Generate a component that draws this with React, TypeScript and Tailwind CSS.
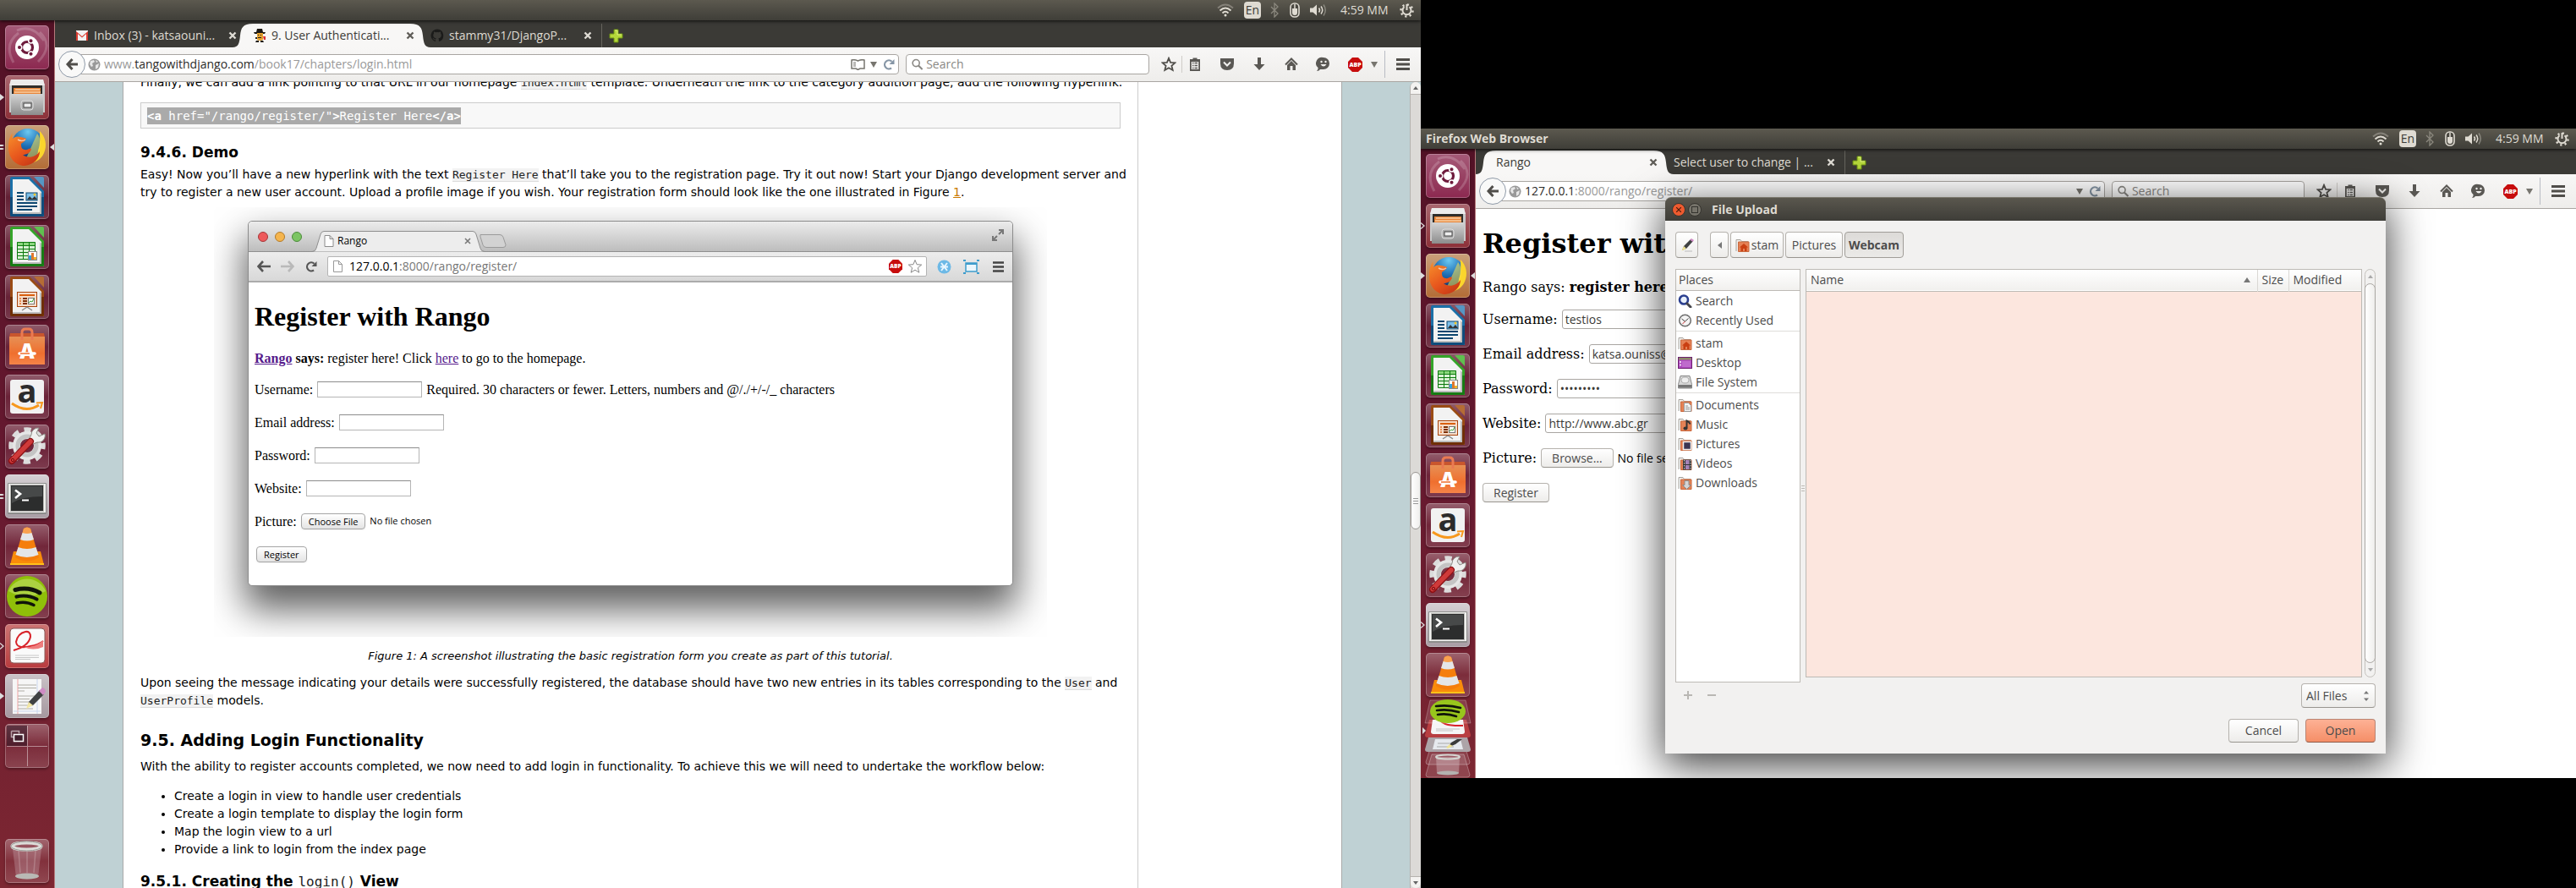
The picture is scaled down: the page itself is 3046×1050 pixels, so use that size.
import React from "react";

const UI = "font-['Open_Sans',sans-serif]";

/* ---------- panel indicators ---------- */

function Wifi() {
  return (
    <svg width="20" height="16" viewBox="0 0 20 16" fill="none" stroke="#dfdbd2" strokeWidth="2">
      <path d="M1 5.5Q10 -2.500 19 5.500" opacity=".35" />
      <path d="M3.500 8.500Q10 2.500 16.500 8.500" />
      <path d="M6.500 11.500Q10 8 13.500 11.500" />
      <circle cx="10" cy="14" r="1.500" fill="#dfdbd2" stroke="none" />
    </svg>
  );
}

function Bluetooth() {
  return (
    <svg width="12" height="18" viewBox="0 0 12 18" fill="none" stroke="#8b887e" strokeWidth="1.3">
      <path d="M2 5l8 8-4 4V1l4 4-8 8" />
    </svg>
  );
}

function MouseBattery() {
  return (
    <svg width="12" height="18" viewBox="0 0 12 18">
      <rect x="1" y="1" width="10" height="16" rx="4.500" fill="#4a4841" stroke="#dfdbd2" strokeWidth="1.600" />
      <path d="M3 7h6v5a3 3 0 0 1-6 0z" fill="#dfdbd2" />
      <path d="M6 2v6" stroke="#dfdbd2" strokeWidth="1.500" />
    </svg>
  );
}

function Volume() {
  return (
    <svg width="20" height="16" viewBox="0 0 20 16" fill="none" stroke="#dfdbd2" strokeWidth="1.500">
      <path d="M0 5.500h3.500L8 1.500v13L3.500 10.500H0z" fill="#dfdbd2" stroke="none" />
      <path d="M10.500 5.500q2 2.500 0 5M13 3.500q3.500 4.500 0 9" />
      <path d="M16 1.500q4.500 6.500 0 13" opacity=".4" />
    </svg>
  );
}

function Session() {
  return (
    <svg width="17" height="17" viewBox="0 0 17 17" fill="none" stroke="#dfdbd2">
      <circle cx="8.500" cy="8.500" r="7" strokeWidth="2.500" strokeDasharray="2.200 3.300" />
      <path d="M5.500 4.300a5 5 0 1 0 6 0" strokeWidth="2" />
      <path d="M8.500 1v7" strokeWidth="2" />
    </svg>
  );
}

function TopPanel({ title }: { title?: string }) {
  return (
    <header className={`${UI} relative z-10 flex h-6 shrink-0 items-center bg-linear-to-b from-[#5c594f] to-[#3f3e38] pr-2 pl-1.5 text-sm text-[#dfdbd2] shadow-[0_1px_4px_rgba(0,0,0,0.8)]`}>
      <span className="font-bold">{title}</span>
      <div className="ml-auto flex items-center">
        <Wifi />
        <span className="ml-3 flex h-5 w-5 items-center justify-center rounded-sm bg-[#dfdbd2] text-sm text-[#3c3b37]">En</span>
        <span className="ml-2.5"><Bluetooth /></span>
        <span className="ml-3"><MouseBattery /></span>
        <span className="ml-3"><Volume /></span>
        <span className="ml-4 w-[58px] whitespace-nowrap">4:59 MM</span>
        <span className="ml-3"><Session /></span>
      </div>
    </header>
  );
}

/* ---------- launcher ---------- */

function UbuntuIcon() {
  return (
    <svg width="52" height="52" viewBox="0 0 52 52">
      <path d="M10 44Q-2 22 16 9M41 8Q58 24 39 43M14 6Q32 -2 46 18" fill="none" stroke="#fff" strokeWidth="3" opacity=".18" />
      <circle cx="26" cy="26" r="14" fill="#fff" />
      <circle cx="26" cy="26" r="6.500" fill="none" stroke="#6e1b3c" strokeWidth="3.200" />
      <g stroke="#fff" strokeWidth="1.500" fill="#6e1b3c">
        <circle cx="17" cy="26" r="2.800" />
        <circle cx="30.500" cy="18.200" r="2.800" />
        <circle cx="30.500" cy="33.800" r="2.800" />
      </g>
    </svg>
  );
}

function FilesIcon() {
  return (
    <svg width="52" height="52" viewBox="0 0 52 52">
      <defs>
        <linearGradient id="cab" x1="0" y1="0" x2="0" y2="1">
          <stop offset="0" stopColor="#d4d4d4" />
          <stop offset="1" stopColor="#8c8c8c" />
        </linearGradient>
      </defs>
      <path d="M7 5h38l2 8v31H5V13z" fill="#c9c9c9" />
      <path d="M7 5h38l2 7H5z" fill="#ececec" />
      <path d="M8 12h36v11H8z" fill="#2f2d2a" />
      <path d="M10 15h32v8H10z" fill="#e8853a" />
      <path d="M12 17h29M11 20h31" stroke="#fff3d8" strokeWidth="1.200" />
      <path d="M7 22h38v25H7z" fill="url(#cab)" />
      <rect x="19" y="30" width="14" height="11" rx="3" fill="#aaa" stroke="#dedede" />
      <rect x="22" y="33" width="9" height="5" fill="#eee" stroke="#444" />
    </svg>
  );
}

function FirefoxIcon() {
  return (
    <svg width="52" height="52" viewBox="0 0 52 52">
      <defs>
        <radialGradient id="globe" cx=".5" cy=".1" r=".9">
          <stop offset="0" stopColor="#6cc9f2" />
          <stop offset=".5" stopColor="#1f6fb5" />
          <stop offset="1" stopColor="#0b2a63" />
        </radialGradient>
        <linearGradient id="fox" x1="0" y1="0" x2=".7" y2="1">
          <stop offset="0" stopColor="#f7912c" />
          <stop offset=".6" stopColor="#e8571d" />
          <stop offset="1" stopColor="#c93a16" />
        </linearGradient>
      </defs>
      <circle cx="27" cy="23" r="19" fill="url(#globe)" />
      <path d="M41 7c7 7 9 17 5 26-4 9-13 13-20 11 9-3 13-8 13-14 3-8 2-15 2-23z" fill="#fbd52c" />
      <path d="M38 10c5 6 5 16 1 24-4 5-9 7-14 5z" fill="#fbe24c" opacity=".55" />
      <path d="M9 9c-1 3-1 5 0 7 3-3 6-3 9-2 3 0 4 1 7 2-1 3-4 4-6 6 0 3 0 6 4 7 4 1 6-3 8-1-1 5-6 7-10 7 6 5 15 3 20-4 0 8-7 16-18 17C12 48 4 38 4 27 4 19 5 14 9 9z" fill="url(#fox)" />
      <path d="M15 17q5 3 9 0" stroke="#fff" strokeWidth="1.500" fill="none" opacity=".6" />
    </svg>
  );
}

function OfficePage({ dark, mid, light, children }: { dark: string; mid: string; light: string; children: React.ReactNode }) {
  return (
    <svg width="52" height="52" viewBox="0 0 52 52">
      <path d="M8 2h21l17 17v30H8a2 2 0 0 1-2-2V4a2 2 0 0 1 2-2z" fill={mid} />
      <path d="M6 26h40v21a2 2 0 0 1-2 2H8a2 2 0 0 1-2-2z" fill={dark} opacity=".7" />
      <path d="M34 2h10a2 2 0 0 1 2 2v11z" fill={light} />
      <path d="M9 5h19l15 15v26H9z" fill="#f2f2f2" />
      <path d="M9 46V44h32V20l2 2v24z" fill="#bcbcbc" />
      {children}
    </svg>
  );
}

function WriterIcon() {
  return (
    <OfficePage dark="#0a3f69" mid="#1b70a8" light="#5596c4">
      <path d="M14 21h8M14 25h8M14 29h8M14 33h24M14 37h24M14 41h18" stroke="#0b466f" strokeWidth="2" />
      <rect x="25" y="21" width="13" height="9" fill="#7dc0ea" stroke="#0b466f" />
      <path d="M26 29l3-4 3 3 3-3 3 4z" fill="#333" />
      <circle cx="35" cy="23" r="1.500" fill="#f5c52a" />
    </OfficePage>
  );
}

function CalcIcon() {
  return (
    <OfficePage dark="#0c6b0c" mid="#35a52a" light="#5fc04f">
      <path d="M14 20h22v20H14z" fill="#d9f2d4" />
      <path d="M14 20h22v4H14z" fill="#8ad67d" />
      <path d="M14.500 20.500h21v20h-21zM14 24.500h22M14 28.500h22M14 32.500h22M14 36.500h22M21.500 20v20M28.500 20v20" fill="none" stroke="#0d7a0f" />
      <rect x="27.500" y="31.500" width="10" height="10" fill="#fff" stroke="#888" />
      <path d="M28 36h3v5h-3z" fill="#2fa3e0" />
      <path d="M31 33h3v8h-3z" fill="#e0792f" />
      <path d="M34 38h3v3h-3z" fill="#f0b429" />
    </OfficePage>
  );
}

function ImpressIcon() {
  return (
    <OfficePage dark="#5c2400" mid="#9a4c15" light="#b56c35">
      <rect x="14.500" y="20.500" width="23" height="17" fill="#f6ddca" stroke="#a8440d" />
      <path d="M17 24h18" stroke="#d9600f" strokeWidth="2" />
      <path d="M17 28h2M17 31h2M17 34h2" stroke="#e88a4e" strokeWidth="2" />
      <path d="M21 28h5M21 31h5M21 34h5" stroke="#7c2f05" strokeWidth="2" />
      <rect x="27.500" y="27.500" width="7" height="7" fill="#fff" stroke="#777" />
      <path d="M28 33l2-2 2 1 2-4" fill="none" stroke="#3a9c2c" />
      <path d="M26 38l-6 4M26 38l6 4" stroke="#8a8a8a" strokeWidth="1.500" />
    </OfficePage>
  );
}

function SoftwareIcon() {
  return (
    <svg width="52" height="52" viewBox="0 0 52 52">
      <defs>
        <linearGradient id="bag" x1="0" y1="0" x2="0" y2="1">
          <stop offset="0" stopColor="#e79055" />
          <stop offset=".6" stopColor="#ef6f2e" />
          <stop offset="1" stopColor="#f58448" />
        </linearGradient>
      </defs>
      <path d="M6 10h40l1 5H5z" fill="#c9562d" />
      <path d="M5 14h42v33H5z" fill="url(#bag)" />
      <path d="M20 18V9q0-4 4-4h4q4 0 4 4v9" fill="none" stroke="#ea7a52" strokeWidth="3" />
      <text x="26" y="40" textAnchor="middle" fontFamily="Open Sans" fontWeight="800" fontSize="24" fill="#fff">A</text>
      <path d="M17 34h18" stroke="#fff" strokeWidth="3.600" strokeLinecap="round" />
      <path d="M18 34h11" stroke="#ef6f2e" strokeWidth="1.500" />
    </svg>
  );
}

function AmazonIcon() {
  return (
    <svg width="52" height="52" viewBox="0 0 52 52">
      <rect x="6" y="6" width="40" height="40" rx="3" fill="#f1f1f1" />
      <text x="26" y="33" textAnchor="middle" fontFamily="Open Sans" fontWeight="700" fontSize="38" fill="#2b2b2b">a</text>
      <path d="M8 34q17 12 32 2" fill="none" stroke="#f7981d" strokeWidth="3" />
      <path d="M37 33.500l7-.500-2 7" fill="none" stroke="#f7981d" strokeWidth="2" />
    </svg>
  );
}

function SettingsIcon() {
  return (
    <svg width="52" height="52" viewBox="0 0 52 52">
      <circle cx="26" cy="25" r="18.500" fill="none" stroke="#dcdcdc" strokeWidth="6.500" strokeDasharray="8 6.530" strokeDashoffset="4" />
      <circle cx="26" cy="25" r="12.500" fill="none" stroke="#e6e6e6" strokeWidth="9" />
      <circle cx="26" cy="25" r="11" fill="none" stroke="#c4c4c4" strokeWidth="5" />
      <path d="M31 12a8 8 0 0 1 9-8l-3 6 3 4 7-3a8 8 0 0 1-9 10l-5 2-5-5z" fill="#f0f0ef" stroke="#8b8b84" />
      <path d="M8 43L30 20" stroke="#8d1014" strokeWidth="8" strokeLinecap="round" />
      <path d="M8 42.500L30 20" stroke="#cf3a3a" strokeWidth="5.500" strokeLinecap="round" />
      <circle cx="9" cy="42" r="1.700" fill="none" stroke="#7c0d10" />
    </svg>
  );
}

function TerminalIcon() {
  return (
    <svg width="52" height="52" viewBox="0 0 52 52">
      <rect x="3" y="10" width="46" height="37" rx="1" fill="#8d8d8b" />
      <rect x="4" y="11" width="44" height="34" fill="#f0f0ee" />
      <rect x="6" y="12" width="40" height="32" fill="#b9b9b6" />
      <rect x="7" y="13" width="38" height="30" fill="#2c2d2d" />
      <path d="M8 14h36v12Q20 26 8 34z" fill="#5a5b5b" opacity=".6" />
      <path d="M12 18.500l6 4.500-6 5" fill="none" stroke="#fff" strokeWidth="2.600" />
      <path d="M20 30.500h8" stroke="#fff" strokeWidth="2" />
    </svg>
  );
}

function VlcIcon() {
  return (
    <svg width="52" height="52" viewBox="0 0 52 52">
      <path d="M10 32h32l4 16H6z" fill="#f98c0a" />
      <path d="M6 46h40v2H6z" fill="#ffc21a" />
      <path d="M22 5q4-3 8 0l10 34q-14 9-28 0z" fill="#f57e0c" />
      <path d="M20.500 10h11l2.500 8q-8 3-16 0z" fill="#e4e6e8" />
      <path d="M15.500 27q10.500 4 21 0l3 9q-14 6-27 0z" fill="#e4e6e8" />
      <path d="M22 5q4-3 8 0l1.500 5q-5.500 2-11 0z" fill="#f9a14f" />
    </svg>
  );
}

function SpotifyIcon() {
  return (
    <svg width="52" height="52" viewBox="0 0 52 52">
      <circle cx="26" cy="26" r="24" fill="#8fbf09" />
      <path d="M4 20a24 24 0 0 1 44 0Q26 32 4 20z" fill="#b8da5a" opacity=".7" />
      <g fill="none" stroke="#10140a" strokeLinecap="round">
        <path d="M12 18.500q16-4 29 3.500" strokeWidth="5" />
        <path d="M13.500 26.500q13-3 24 3" strokeWidth="4.200" />
        <path d="M14 34q11-2.500 20 2.500" strokeWidth="3.500" />
      </g>
    </svg>
  );
}

function PdfIcon() {
  return (
    <svg width="52" height="52" viewBox="0 0 52 52">
      <rect x="6" y="5" width="41" height="41" rx="4" fill="#fafafa" stroke="#8a5a58" />
      <path d="M10 31q18-5 20-16 0-7-6-6-9 2-11 12 1 9 17 5 9-1 15-6" fill="none" stroke="#d8232a" strokeWidth="2" />
      <path d="M22 27q14 1 23-8v8q-12 5-23 0z" fill="#ee7d7d" />
      <path d="M12 37h28M12 39.500h28M12 41.500h18" stroke="#c8c8c8" strokeWidth="1.200" />
    </svg>
  );
}

function EditorIcon() {
  return (
    <svg width="52" height="52" viewBox="0 0 52 52">
      <path d="M9 6h34v41H9z" fill="#f6f6f6" />
      <path d="M15 6v41" stroke="#f3a3a3" />
      <path d="M38 6v41M10 44h32" stroke="#c9d6ee" />
      <path d="M15 13h22M15 16.500h22M15 20h8M15 26h20M15 29.500h14M15 33h18M15 37h14M15 41h18" stroke="#b0aea6" />
      <path d="M28 33L41 19l5 5-13 13-6 2z" fill="#3f4142" />
      <path d="M25 41l3-8 5 4z" fill="#f3e7a2" />
      <path d="M40 20l4-4q4 1 4 5l-3 4z" fill="#cf8cc4" />
    </svg>
  );
}

function WorkspaceIcon() {
  return (
    <svg width="52" height="52" viewBox="0 0 52 52">
      <path d="M2 2h24v24H2z" fill="#2c1320" opacity=".55" />
      <path d="M26.500 2v48M2 26.500h48" stroke="#fff" opacity=".45" />
      <path d="M7.500 8.500h9v3M7.500 8.500v7h3" fill="none" stroke="#b9a3aa" strokeWidth="1.500" />
      <rect x="10.500" y="12.500" width="11" height="8" fill="#40202d" stroke="#fff" strokeWidth="1.500" />
    </svg>
  );
}

function TrashIcon() {
  return (
    <svg width="52" height="52" viewBox="0 0 52 52">
      <path d="M9 12h34l-4 33q-13 5-26 0z" fill="#c9a5ae" opacity=".35" />
      <ellipse cx="26" cy="44" rx="14" ry="3.500" fill="#b9b9b5" />
      <path d="M16 14l2 26M36 14l-2 26M26 14v26" stroke="#fff" strokeWidth="1.500" opacity=".2" />
      <ellipse cx="25.500" cy="8.500" rx="17" ry="4" fill="none" stroke="#dcdcd8" strokeWidth="4" />
      <ellipse cx="25.500" cy="8.500" rx="18.500" ry="5.500" fill="none" stroke="#9a9a96" strokeWidth="1" />
    </svg>
  );
}

type Mark = "arrow" | "hollow" | "pips" | undefined;

function Indicator({ mark }: { mark: Mark }) {
  if (!mark) return null;
  return (
    <svg className="absolute top-1/2 -left-1.5 -translate-y-1/2" width="6" height="10" viewBox="0 0 6 10">
      {mark === "arrow" && <path d="M0 1l5 4-5 4z" fill="#ddd" />}
      {mark === "hollow" && <path d="M0 1.500l4 3.500-4 3.500" fill="none" stroke="#ddd" strokeWidth="1.300" />}
      {mark === "pips" && <path d="M0 2h3l2 1-2 1H0zM0 6h3l2 1-2 1H0z" fill="#ddd" />}
    </svg>
  );
}

const glass = "bg-linear-to-b from-white/30 via-white/5 to-white/15";

const tiles: { name: string; icon: () => React.ReactElement; tone: string }[] = [
  { name: "Dash", icon: UbuntuIcon, tone: "bg-linear-to-b from-[#a55a78] to-[#8c2850]" },
  { name: "Files", icon: FilesIcon, tone: "bg-linear-to-b from-[#a8666f] to-[#8c2f38]" },
  { name: "Firefox", icon: FirefoxIcon, tone: "bg-linear-to-b from-[#c9a07a] to-[#b36c35]" },
  { name: "Writer", icon: WriterIcon, tone: glass },
  { name: "Calc", icon: CalcIcon, tone: glass },
  { name: "Impress", icon: ImpressIcon, tone: glass },
  { name: "Software Center", icon: SoftwareIcon, tone: glass },
  { name: "Amazon", icon: AmazonIcon, tone: glass },
  { name: "System Settings", icon: SettingsIcon, tone: glass },
  { name: "Terminal", icon: TerminalIcon, tone: "bg-linear-to-b from-[#d6d0d4] to-[#a89da4]" },
  { name: "VLC", icon: VlcIcon, tone: glass },
  { name: "Spotify", icon: SpotifyIcon, tone: glass },
  { name: "Document Viewer", icon: PdfIcon, tone: "bg-linear-to-b from-[#cc7473] to-[#b83a3e]" },
  { name: "Text Editor", icon: EditorIcon, tone: "bg-linear-to-b from-[#cbc3c8] to-[#a5989f]" },
  { name: "Workspaces", icon: WorkspaceIcon, tone: glass },
];

function Tile({ name, icon: Icon, tone, mark, focused }: { name: string; icon: () => React.ReactElement; tone: string; mark?: Mark; focused?: boolean }) {
  return (
    <div className="relative h-[52px] w-[52px] shrink-0">
      <Indicator mark={mark} />
      <button aria-label={name} className={`block h-full w-full overflow-hidden rounded-[5px] shadow-[inset_0_0_0_1px_rgba(255,255,255,0.25),0_2px_3px_rgba(0,0,0,0.3)] ${tone}`}>
        <Icon />
      </button>
      {focused && (
        <svg className="absolute top-1/2 -right-1.5 -translate-y-1/2" width="5" height="8" viewBox="0 0 5 8">
          <path d="M5 0L0 4l5 4z" fill="#ddd" />
        </svg>
      )}
    </div>
  );
}

/* Launcher entries that no longer fit are tilted away at the bottom edge. */
function FoldedTiles() {
  return (
    <svg className="-mt-1 -ml-1 shrink-0" width="60" height="93" viewBox="0 0 60 93">
      <path d="M11 65h38l7 24q0 3-3 3H7q-3 0-3-3z" fill="#fff" fillOpacity=".14" stroke="#fff" strokeOpacity=".3" />
      <path d="M11 52h38l7 22q0 3-3 3H7q-3 0-3-3z" fill="#fff" fillOpacity=".12" stroke="#fff" strokeOpacity=".3" />
      <path d="M16 68h28l-1 19q-13 4-26 0z" fill="#d9c3c9" opacity=".4" />
      <ellipse cx="30" cy="68" rx="14" ry="2.500" fill="none" stroke="#d5d5d1" strokeWidth="2" />
      <ellipse cx="30" cy="87" rx="13" ry="2.500" fill="#b5b2b0" />
      <path d="M7 45h46l4 14q0 3-3 3H6q-3 0-3-3z" fill="#ada4a8" />
      <path d="M15 47h30l3 12H12z" fill="#e6e9ee" />
      <path d="M18 52h22M17 56h20" stroke="#a9a9a9" />
      <path d="M34 51l7-4h6l-8 6-9 4z" fill="#3a3a3a" />
      <path d="M28 57l4-4 4 2-6 3z" fill="#efe394" />
      <path d="M8 24h44l5 18q0 3-3 3H6q-3 0-3-3z" fill="#b83e41" />
      <path d="M12 24h36l2 14q0 3-3 3H13q-3 0-3-3z" fill="#f5f5f5" />
      <path d="M20 21q0 11 28 10" stroke="#d8232a" strokeWidth="2" fill="none" />
      <path d="M16 35h28M16 37h20" stroke="#c4c4c4" />
      <path d="M0 33l4 4-4 4z" fill="#ddd" />
      <path d="M9 1h42l6 27H3z" fill="#fff" fillOpacity=".12" stroke="#fff" strokeOpacity=".25" />
      <ellipse cx="30" cy="14" rx="21" ry="14" fill="#98c61c" />
      <path d="M16 8q15-2 29 2M17 13q13-2 26 2M18 18q11-2 22 2" fill="none" stroke="#10140a" strokeWidth="2.600" strokeLinecap="round" />
    </svg>
  );
}

function Launcher({ count, marks, folded }: { count: number; marks: Record<string, Mark>; folded?: boolean }) {
  return (
    <nav aria-label="Launcher" className="flex w-[65px] shrink-0 flex-col gap-[7px] overflow-hidden border-r border-[#b77a7c] bg-linear-to-b from-[#531226] via-[#65182f] to-[#7d2732] pt-1.5 pl-1.5">
      {tiles.slice(0, count).map((t) => (
        <Tile key={t.name} {...t} mark={marks[t.name]} focused={t.name === "Firefox"} />
      ))}
      {folded ? (
        <FoldedTiles />
      ) : (
        <div className="mt-auto pb-1.5">
          <Tile name="Trash" icon={TrashIcon} tone={glass} />
        </div>
      )}
    </nav>
  );
}

/* ---------- browser chrome ---------- */

function GmailMark() {
  return (
    <svg width="16" height="16" viewBox="0 0 16 16">
      <path d="M1 2h14v12H1z" fill="#f2f2f2" />
      <path d="M1 14V3l7 6 7-6v11h-2V6L8 10.500 3 6v8z" fill="#d93a2f" />
    </svg>
  );
}

function TangoMark() {
  return (
    <svg width="16" height="17" viewBox="0 0 16 17">
      <path d="M5 0h6l1 4h3l-1 2H2L1 4h3z" fill="#1c1814" />
      <path d="M5 5h7v8q-4 2-7 0z" fill="#e5a12d" />
      <path d="M6 7h1v1H6zM9 7h1v1H9zM6 10h4v1H6zM3 10h2v2H3z" fill="#222" />
      <path d="M12 9h3v4h-2z" fill="#d93030" />
      <path d="M4 14h3v2H3zM9 14h3l1 2H9z" fill="#1c1814" />
    </svg>
  );
}

function GithubMark() {
  return (
    <svg width="16" height="16" viewBox="0 0 16 16">
      <path fill="#1b1b1a" d="M8 .5a7.500 7.500 0 0 0-2.400 14.600c.4.100.5-.200.5-.400v-1.400c-2.100.5-2.500-.900-2.500-.900-.400-.900-.900-1.100-.900-1.100-.7-.5.1-.5.1-.5.800.1 1.200.8 1.200.8.7 1.200 1.800.8 2.200.6.1-.5.300-.8.5-1-1.700-.200-3.400-.8-3.400-3.700 0-.8.300-1.500.8-2-.1-.200-.3-1 .1-2 0 0 .6-.200 2 .8a7 7 0 0 1 3.700 0c1.400-1 2-.8 2-.8.4 1 .2 1.800.1 2 .5.5.8 1.200.8 2 0 2.900-1.800 3.500-3.400 3.700.3.200.5.7.5 1.400v2c0 .2.100.5.500.4A7.500 7.500 0 0 0 8 .5z" />
    </svg>
  );
}

function CloseMark({ color }: { color: string }) {
  return (
    <svg width="10" height="10" viewBox="0 0 10 10">
      <path d="M1.500 1.500l7 7M8.500 1.500l-7 7" stroke={color} strokeWidth="2.400" />
    </svg>
  );
}

interface TabInfo {
  label: string;
  icon?: React.ReactNode;
  active?: boolean;
}

function Tab({ label, icon, active }: TabInfo) {
  return (
    <div className={`relative flex h-7 w-[210px] items-center pr-[7px] pl-3 ${active ? "bg-[#f8f7f6] text-[#3c3b37]" : "text-[#dfdbd2]"}`}>
      {active && (
        <>
          <svg className="absolute top-0 -left-3" width="24" height="28" viewBox="0 0 24 28">
            <path d="M12 0h12v28H12z" fill="#3b3a36" />
            <path d="M0 28C7 28 8 23 9 14 10 5 12 0 24 0V28z" fill="#f8f7f6" />
          </svg>
          <svg className="absolute top-0 -right-3" width="24" height="28" viewBox="0 0 24 28">
            <path d="M0 0h12v28H0z" fill="#3b3a36" />
            <path d="M24 28C17 28 16 23 15 14 14 5 12 0 0 0V28z" fill="#f8f7f6" />
          </svg>
        </>
      )}
      {icon && <span className="relative mr-1.5">{icon}</span>}
      <span className="relative flex-1 whitespace-nowrap">{label}</span>
      <button aria-label={`Close ${label}`} className="relative">
        <CloseMark color={active ? "#5f5d58" : "#dedbd4"} />
      </button>
    </div>
  );
}

function TabBar({ tabs, className }: { tabs: TabInfo[]; className: string }) {
  return (
    <div className={`${UI} flex shrink-0 items-end bg-[#3b3a36] pl-3 text-sm ${className}`}>
      {tabs.map((t) => (
        <Tab key={t.label} {...t} />
      ))}
      <div className="ml-1 h-7 w-px bg-[#66645d]" />
      <button aria-label="New tab" className="ml-2 flex h-7 items-center">
        <svg width="17" height="17" viewBox="0 0 17 17">
          <path d="M6 1h5v5h5v5h-5v5H6v-5H1V6h5z" fill="#b4d73a" stroke="#6d9112" />
          <path d="M7 2h3v5h5" fill="none" stroke="#ddf07f" />
        </svg>
      </button>
    </div>
  );
}

function Reload({ color }: { color: string }) {
  return (
    <svg width="13" height="13" viewBox="0 0 13 13">
      <path d="M9 10.500A5 5 0 1 1 9.500 2.800" fill="none" stroke={color} strokeWidth="2.200" />
      <path d="M12.500 0v6H6.500z" fill={color} />
    </svg>
  );
}

function Caret() {
  return (
    <svg width="8" height="7" viewBox="0 0 8 7">
      <path d="M0 0h8L4 7z" fill="#77756f" />
    </svg>
  );
}

function AbpMark({ size }: { size: number }) {
  return (
    <svg width={size} height={size} viewBox="0 0 17 17">
      <path d="M5 0h7l5 5v7l-5 5H5l-5-5V5z" fill="#c70d0d" />
      <text x="8.500" y="11" textAnchor="middle" fontFamily="Open Sans" fontWeight="800" fontSize="7" fill="#fff">ABP</text>
    </svg>
  );
}

const toolIcons: { name: string; art: React.ReactNode }[] = [
  {
    name: "Bookmarks",
    art: (
      <svg width="18" height="18" viewBox="0 0 18 18">
        <path d="M6.500 3V1.500h5V3H15v14H3V3z" fill="#5a5854" />
        <path d="M4.800 6h8.400v9H4.800z" fill="#f3f2f0" />
        <path d="M6 7.500h1.500M8.500 7.500H12M6 10.500h1.500M8.500 10.500H12M6 13.500h1.500M8.500 13.500H12" stroke="#5a5854" strokeWidth="1.500" />
      </svg>
    ),
  },
  {
    name: "Pocket",
    art: (
      <svg width="18" height="18" viewBox="0 0 18 18">
        <path d="M1 2h16v6q0 8-8 8T1 8z" fill="#5a5854" />
        <path d="M5 6.500l4 4 4-4" fill="none" stroke="#f3f2f0" strokeWidth="2" />
      </svg>
    ),
  },
  {
    name: "Downloads",
    art: (
      <svg width="18" height="18" viewBox="0 0 18 18">
        <path d="M7 1h4v8h4.500L9 16 2.500 9H7z" fill="#5a5854" />
      </svg>
    ),
  },
  {
    name: "Home",
    art: (
      <svg width="18" height="18" viewBox="0 0 18 18">
        <path d="M2 9.500l7-7 7 7" fill="none" stroke="#5a5854" strokeWidth="2" />
        <path d="M4 10l5-5 5 5v6h-3.500v-5h-3v5H4z" fill="#5a5854" />
      </svg>
    ),
  },
  {
    name: "Chat",
    art: (
      <svg width="18" height="18" viewBox="0 0 18 18">
        <path d="M9 1a7 7 0 0 1 0 14q-3 0-4 0-1 2-4 2 2-2 1.500-4A7 7 0 0 1 9 1z" fill="#5a5854" />
        <path d="M5.500 9q3.500 5 7 0z" fill="#f3f2f0" />
        <circle cx="6.500" cy="6" r="1.200" fill="#f3f2f0" />
        <circle cx="11.500" cy="6" r="1.200" fill="#f3f2f0" />
      </svg>
    ),
  },
  { name: "Adblock Plus", art: <AbpMark size={17} /> },
];

function Toolbar({ pre, host, path, reader, searchWidth }: { pre?: string; host: string; path: string; reader?: boolean; searchWidth: string }) {
  return (
    <div className={`${UI} flex h-[41px] shrink-0 items-center border-b border-[#a9a6a2] bg-linear-to-b from-[#f8f7f6] to-[#eeedeb] pl-1 text-sm`}>
      <button aria-label="Back" className="relative z-10 flex h-8 w-8 items-center justify-center rounded-full border border-[#8f9aa8] bg-[#f9f9f8]">
        <svg width="16" height="16" viewBox="0 0 16 16">
          <path d="M8.500 2L3 8l5.500 6M3 8h12" fill="none" stroke="#504e4a" strokeWidth="3" />
        </svg>
      </button>
      <div className="-ml-1.5 flex h-6 min-w-0 flex-1 items-center rounded-r-sm border border-[#a9a6a2] bg-white pr-1 pl-2">
        <svg width="15" height="15" viewBox="0 0 15 15">
          <circle cx="7.500" cy="7.500" r="7" fill="#999" />
          <path d="M3 3l4-1 1 2-3 2 1 3-2 1-2-3zM9 8l4-2-1 5-3 2zM9 2l3 2-2 1z" fill="#e6e6e6" />
        </svg>
        <div role="textbox" aria-label="Address" className="ml-1 flex-1 whitespace-nowrap text-[#999]">
          {pre}
          <span className="text-[#2c2b29]">{host}</span>
          {path}
        </div>
        {reader && (
          <svg width="17" height="13" viewBox="0 0 17 13" fill="none" stroke="#77756f">
            <path d="M8.500 2Q5 0 1 1v10h5l2.500 1.500L11 11h5V1q-4-1-7.500 1z" strokeWidth="1.500" />
            <path d="M3 4h3M3 6h3M3 8h3" />
          </svg>
        )}
        <span className="ml-1.5"><Caret /></span>
        <button aria-label="Reload" className="ml-2"><Reload color="#8595a5" /></button>
      </div>
      <label className={`ml-2 flex h-6 items-center rounded-sm border border-[#a9a6a2] bg-white pl-1.5 ${searchWidth}`}>
        <svg width="14" height="14" viewBox="0 0 14 14" fill="none" stroke="#8a8884">
          <circle cx="5.500" cy="5.500" r="4.300" strokeWidth="1.700" />
          <path d="M8.500 8.500l5 5" strokeWidth="2.300" />
        </svg>
        <input aria-label="Search" placeholder="Search" className="ml-1 w-full min-w-0 bg-transparent outline-none placeholder:text-[#8a8884]" />
      </label>
      <button aria-label="Bookmark this page" className="ml-3.5">
        <svg width="18" height="18" viewBox="0 0 18 18">
          <path d="M9 1.800l2.100 5 5.400.400-4.100 3.500 1.300 5.300L9 13.200 4.300 16l1.300-5.300L1.500 7.200l5.400-.400z" fill="none" stroke="#504e4a" strokeWidth="1.800" />
        </svg>
      </button>
      <div className="ml-1.5 h-5 w-px bg-[#cfccc8]" />
      <div className="ml-1.5 flex gap-5">
        {toolIcons.map((t) => (
          <button key={t.name} aria-label={t.name}>{t.art}</button>
        ))}
      </div>
      <span className="ml-2.5"><Caret /></span>
      <div className="ml-2 h-8 w-px bg-[#b9bcc4]" />
      <button aria-label="Menu" className="mr-[13px] ml-[13px]">
        <svg width="16" height="14" viewBox="0 0 16 14">
          <path d="M0 1.500h16M0 7h16M0 12.500h16" stroke="#504e4a" strokeWidth="3" />
        </svg>
      </button>
    </div>
  );
}

/* ---------- tutorial page ---------- */

function Code({ children }: { children: React.ReactNode }) {
  return <code className="border-b border-[#ddd] bg-[#f2f2f2] font-['DejaVu_Sans_Mono',monospace] text-[13px] text-[#222]">{children}</code>;
}

function MacField({ id, label, after }: { id: string; label: string; after?: string }) {
  return (
    <div className="flex h-[39px] items-center gap-[5px]">
      <label htmlFor={id}>{label}</label>
      <input id={id} className="h-[19px] w-[124px] border border-[#b5b5b5] border-t-[#8c8c8c] bg-white" />
      {after && <span>{after}</span>}
    </div>
  );
}

const macButton = "rounded-sm border border-[#a5a5a5] bg-linear-to-b from-white to-[#e4e4e4] px-2 font-['Open_Sans',sans-serif] text-[11px] leading-[17px] text-black shadow-xs";

function FigureWindow() {
  return (
    <div className="mx-auto w-[985px] max-w-full overflow-hidden px-10 pt-4 pb-[60px]">
      <div className="rounded-[5px] border border-[#8c8c8c] bg-white shadow-[0_24px_44px_4px_rgba(0,0,0,0.62)]">
        <div className="flex h-9 items-end rounded-t-[5px] border-b border-[#8f8f8f] bg-linear-to-b from-[#ececec] to-[#bdbdbd] font-['Open_Sans',sans-serif] text-xs">
          <div className="flex gap-2 self-center pl-[11px]">
            <span className="h-3 w-3 rounded-full border border-[#a5383a] bg-[#ee5a5c]" />
            <span className="h-3 w-3 rounded-full border border-[#b27b2c] bg-[#f5b54e]" />
            <span className="h-3 w-3 rounded-full border border-[#4c8b3b] bg-[#7cc563]" />
          </div>
          <div className="relative ml-5 flex h-6 w-[188px] items-center">
            <svg className="absolute top-0 -left-2" width="204" height="25" viewBox="0 0 204 25">
              <path d="M0 24.500q4 0 5-4L10 4q1-3.500 4-3.500h176q3 0 4 3.500l5 16.500q1 4 5 4" fill="#ededed" stroke="#8f8f8f" />
            </svg>
            <svg className="relative ml-1.5" width="12" height="14" viewBox="0 0 12 14">
              <path d="M1 .5h6l4 4v9H1zM7 .5v4h4" fill="#fff" stroke="#8c8c8c" />
            </svg>
            <span className="relative ml-1 flex-1">Rango</span>
            <button aria-label="Close tab" className="relative mr-2">
              <svg width="8" height="8" viewBox="0 0 8 8"><path d="M1 1l6 6M7 1L1 7" stroke="#777" strokeWidth="1.600" /></svg>
            </button>
          </div>
          <svg className="mb-1 ml-0.5" width="32" height="16" viewBox="0 0 32 16">
            <path d="M1 .5h23q3 0 4 3l3 9q0 3-3 3H8q-3 0-4-3L1 3z" fill="#d2d2d2" stroke="#9a9a9a" />
          </svg>
          <svg className="mr-2.5 mb-3 ml-auto" width="14" height="14" viewBox="0 0 14 14" fill="none" stroke="#777" strokeWidth="2">
            <path d="M8 6l5-5M8 1h5v5M6 8l-5 5M1 8v5h5" />
          </svg>
        </div>
        <div className="flex h-9 items-center border-b-2 border-[#ababab] bg-linear-to-b from-[#ededed] to-[#d8d8d8] pr-2.5 pl-2.5 font-['Open_Sans',sans-serif] text-sm">
          <svg width="16" height="14" viewBox="0 0 16 14"><path d="M7 1L1.500 7 7 13M2 7h14" fill="none" stroke="#555" strokeWidth="2.600" /></svg>
          <svg className="ml-3" width="16" height="14" viewBox="0 0 16 14"><path d="M9 1l5.500 6L9 13M14 7H0" fill="none" stroke="#b9b9b9" strokeWidth="2.600" /></svg>
          <span className="ml-3.5"><Reload color="#555" /></span>
          <div className="ml-3 flex h-6 flex-1 items-center rounded-xs border border-[#b4b4b4] bg-white pr-1 pl-1.5">
            <svg width="11" height="14" viewBox="0 0 11 14"><path d="M.5.5h6l4 4v9H.5zM6.500.5v4h4" fill="#fff" stroke="#999" /></svg>
            <div role="textbox" aria-label="Address" className="ml-2 flex-1 text-[#777]"><span className="text-black">127.0.0.1</span>:8000/rango/register/</div>
            <AbpMark size={16} />
            <svg className="ml-1.5" width="18" height="18" viewBox="0 0 18 18">
              <path d="M9 1.500l2.100 5.200 5.600.400-4.300 3.600 1.400 5.500L9 13.200l-4.800 3 1.400-5.500L1.300 7.100l5.600-.400z" fill="#fff" stroke="#888" />
            </svg>
          </div>
          <svg className="ml-3" width="17" height="17" viewBox="0 0 17 17">
            <circle cx="8.500" cy="8.500" r="8" fill="#6db9e6" />
            <path d="M5 4l7 9M12 4l-7 9M4 8.500h9" stroke="#e8f6ff" strokeWidth="2" />
          </svg>
          <svg className="ml-3.5" width="19" height="17" viewBox="0 0 19 17" fill="none" stroke="#3d9ccc">
            <rect x="3" y="4" width="13" height="10" fill="#eaf6fc" strokeWidth="1.500" />
            <path d="M3 5h13" strokeWidth="2" />
            <path d="M0 1h3M16 1h3M0 16h3M16 16h3" strokeWidth="2" />
          </svg>
          <svg className="ml-4" width="13" height="13" viewBox="0 0 13 13"><path d="M0 1.500h13M0 6.500h13M0 11.500h13" stroke="#444" strokeWidth="2.600" /></svg>
        </div>
        <div className="px-[7px] pt-[22px] pb-[17px] font-['Liberation_Serif',serif] text-base text-black">
          <h1 className="text-[32px] leading-9 font-bold">Register with Rango</h1>
          <p className="mt-5 mb-[5px] leading-6">
            <b><a href="#rango" className="text-[#551a8b] underline">Rango</a> says:</b> register here! Click <a href="#home" className="text-[#551a8b] underline">here</a> to go to the homepage.
          </p>
          <MacField id="fig-user" label="Username:" after="Required. 30 characters or fewer. Letters, numbers and @/./+/-/_ characters" />
          <MacField id="fig-mail" label="Email address:" />
          <MacField id="fig-pass" label="Password:" />
          <MacField id="fig-site" label="Website:" />
          <div className="flex h-[39px] items-center gap-[5px]">
            <span>Picture:</span>
            <button className={macButton}>Choose File</button>
            <span className="font-['Open_Sans',sans-serif] text-[11px]">No file chosen</span>
          </div>
          <div className="flex h-[39px] items-center pl-0.5">
            <button className={macButton}>Register</button>
          </div>
        </div>
      </div>
    </div>
  );
}

function TutorialPage() {
  return (
    <div className="flex min-h-0 flex-1 overflow-hidden bg-[#bfd1d4]">
      <div className="mx-20 flex min-w-0 flex-1 border-x border-[#aaa] bg-white">
        <main className="min-w-0 flex-1 px-5 font-['DejaVu_Sans',sans-serif] text-sm leading-[21px] text-black">
          <p className="-mt-2.5 whitespace-nowrap">
            Finally, we can add a link pointing to that URL in our homepage <Code>index.html</Code> template. Underneath the link to the category addition page, add the following hyperlink.
          </p>
          <pre className="mt-[13px] flex h-[31px] items-center border border-[#ccc] bg-[#f8f8f8] px-[7px] font-['DejaVu_Sans_Mono',monospace] text-sm">
            <span className="bg-[#aaa] text-white"><b>&lt;a</b> href="/rango/register/"<b>&gt;</b>Register Here<b>&lt;/a&gt;</b></span>
          </pre>
          <h3 className="mt-[17px] text-[17px] leading-[22px] font-bold">9.4.6. Demo</h3>
          <p className="mt-[5px] whitespace-nowrap">
            Easy! Now you’ll have a new hyperlink with the text <Code>Register Here</Code> that’ll take you to the registration page. Try it out now! Start your Django development server and
            <br />
            try to register a new user account. Upload a profile image if you wish. Your registration form should look like the one illustrated in Figure <a href="#fig" className="text-[#ca7900] underline">1</a>.
          </p>
          <figure className="mt-[7px]">
            <FigureWindow />
            <figcaption className="mt-3 text-center text-[13px] italic">Figure 1: A screenshot illustrating the basic registration form you create as part of this tutorial.</figcaption>
          </figure>
          <p className="mt-[11px]">
            Upon seeing the message indicating your details were successfully registered, the database should have two new entries in its tables corresponding to the <Code>User</Code> and <Code>UserProfile</Code> models.
          </p>
          <h2 className="mt-6 text-[19px] leading-[24px] font-bold">9.5. Adding Login Functionality</h2>
          <p className="mt-[9px]">With the ability to register accounts completed, we now need to add login in functionality. To achieve this we will need to undertake the workflow below:</p>
          <ul className="mt-3.5 list-disc pl-10">
            <li>Create a login in view to handle user credentials</li>
            <li>Create a login template to display the login form</li>
            <li>Map the login view to a url</li>
            <li>Provide a link to login from the index page</li>
          </ul>
          <h3 className="mt-4 text-[17px] leading-[22px] font-bold">
            9.5.1. Creating the <code className="font-['DejaVu_Sans_Mono',monospace] text-[16px] font-normal text-[#222]">login()</code> View
          </h3>
        </main>
        <aside className="w-[241px] shrink-0 border-l border-[#ccc]" />
      </div>
      <div className="flex w-[13px] shrink-0 flex-col items-center rounded-t-lg border-l border-[#b5b2ae] bg-[#dcdad7]">
        <div className="flex h-3.5 w-full shrink-0 items-center justify-center rounded-t-lg bg-[#f3f2f0]">
          <svg width="6" height="4" viewBox="0 0 6 4"><path d="M0 4h6L3 0z" fill="#666" /></svg>
        </div>
        <div className="w-full grow-[447] border-t border-[#b5b2ae]" />
        <div className="flex h-[68px] w-full shrink-0 flex-col items-center justify-center gap-0.5 rounded-md border border-[#9b9894] bg-linear-to-r from-white to-[#efeeec]">
          <span className="h-px w-1.5 bg-[#999]" />
          <span className="h-px w-1.5 bg-[#999]" />
          <span className="h-px w-1.5 bg-[#999]" />
        </div>
        <div className="w-full grow-[410]" />
        <div className="flex h-3.5 w-full shrink-0 items-center justify-center rounded-b-lg border-t border-[#b5b2ae] bg-[#f3f2f0]">
          <svg width="6" height="4" viewBox="0 0 6 4"><path d="M0 0h6L3 4z" fill="#666" /></svg>
        </div>
      </div>
    </div>
  );
}

/* ---------- registration page ---------- */

function Field({ id, label, value, type = "text" }: { id: string; label: string; value: string; type?: string }) {
  return (
    <div className="flex h-[41px] items-center gap-[5px]">
      <label htmlFor={id}>{label}</label>
      <input id={id} type={type} defaultValue={value} className={`${UI} h-[23px] w-[186px] rounded-[3px] border border-[#a9a6a2] bg-white px-[3px] text-sm text-[#3c3b37]`} />
    </div>
  );
}

const gtkButton = "rounded-sm border border-[#b5b2ad] border-b-[#98958f] bg-linear-to-b from-white to-[#edecea] font-['Open_Sans',sans-serif] text-sm text-[#4c4c4c]";

function RegisterPage() {
  return (
    <main className="min-h-0 flex-1 overflow-hidden bg-white px-2 pt-[21px] font-['DejaVu_Serif',serif] text-base text-black">
      <h1 className="text-[32px] leading-10 font-bold">Register with Rango</h1>
      <p className="mt-[22px] mb-[7px] leading-5">Rango says: <b>register here!</b></p>
      <Field id="username" label="Username:" value="testios" />
      <Field id="email" label="Email address:" value="katsa.ouniss@gmail.com" />
      <Field id="password" label="Password:" value="password1" type="password" />
      <Field id="website" label="Website:" value="http://www.abc.gr" />
      <div className="flex h-[41px] items-center gap-[5px]">
        <span>Picture:</span>
        <button className={`${gtkButton} h-[23px] px-3 leading-5`}>Browse…</button>
        <span className={`${UI} text-sm`}>No file selected.</span>
      </div>
      <div className="flex h-[41px] items-center">
        <button className={`${gtkButton} h-[23px] px-3 leading-5`}>Register</button>
      </div>
    </main>
  );
}

/* ---------- file dialog ---------- */

function Folder({ children }: { children?: React.ReactNode }) {
  return (
    <svg className="shrink-0" width="17" height="16" viewBox="0 0 17 16">
      <path d="M1 15V1.500h5l1.500 2H15v4" fill="#f2f1ef" stroke="#a5a29d" />
      <path d="M3.500 4H16v11.500H3.500z" fill="#e58256" stroke="#c9683c" />
      {children}
    </svg>
  );
}

const houseArt = <path d="M10 6l5 4.500h-1.500V15h-2.500v-3H9v3H6.500v-4.500H5z" fill="#c93f12" />;

const places: { label: string; art: React.ReactNode; gap?: boolean }[] = [
  {
    label: "Search",
    art: (
      <svg width="17" height="16" viewBox="0 0 17 16">
        <circle cx="7" cy="6.500" r="5" fill="#e8f0fb" stroke="#2b3f8f" strokeWidth="2.600" />
        <path d="M11 11l4 4" stroke="#44444a" strokeWidth="3" strokeLinecap="round" />
      </svg>
    ),
  },
  {
    label: "Recently Used",
    art: (
      <svg width="17" height="16" viewBox="0 0 17 16">
        <circle cx="8.500" cy="8" r="6.800" fill="#f4f4f4" stroke="#6d6d6d" strokeWidth="1.500" />
        <path d="M8.500 9L4.500 6M8.500 9l4-3.500" stroke="#444" />
        <path d="M8.500 9l-3 3" stroke="#c33" />
      </svg>
    ),
  },
  { label: "stam", gap: true, art: <Folder>{houseArt}</Folder> },
  {
    label: "Desktop",
    art: (
      <svg width="17" height="16" viewBox="0 0 17 16">
        <rect x=".5" y="1.500" width="16" height="13" fill="#b04cc0" stroke="#6d1f70" />
        <path d="M1 2h15v2.500H1z" fill="#8c8a68" />
        <path d="M3 6v2M3 9.500v2" stroke="#fff" strokeWidth="1.500" />
        <path d="M5 6h10v7H5z" fill="#c980d3" opacity=".6" />
      </svg>
    ),
  },
  {
    label: "File System",
    art: (
      <svg width="17" height="16" viewBox="0 0 17 16">
        <path d="M3 .5h11l2.500 10v4.500H.5v-4.500z" fill="#d8d8d8" stroke="#888" />
        <ellipse cx="8.500" cy="5.500" rx="4.500" ry="3.500" fill="#efefef" stroke="#aaa" />
        <path d="M1 11h15v3.500H1z" fill="#777" />
      </svg>
    ),
  },
  {
    label: "Documents",
    gap: true,
    art: <Folder><path d="M7.500 5.500h5l3 3v7h-8zM9 9h3M9 11h5M9 13h5" fill="#f4f4f4" stroke="#9a9a9a" /></Folder>,
  },
  {
    label: "Music",
    art: <Folder><path d="M10.500 12V3.500q3 1 4 4" fill="none" stroke="#333" strokeWidth="2" /><ellipse cx="9" cy="12.500" rx="2.500" ry="2" fill="#333" /></Folder>,
  },
  {
    label: "Pictures",
    art: <Folder><path d="M6.500 5.500h9v9h-9z" fill="#3a3552" stroke="#eee" strokeWidth="1.500" /></Folder>,
  },
  {
    label: "Videos",
    art: <Folder><path d="M6 3.500h10v12H6z" fill="#333" /><path d="M9 4h4.500v5H9zM9 10h4.500v5H9z" fill="#a583b8" /><path d="M7.500 4v11M15 4v11" stroke="#ddd" strokeDasharray="1.500 1.500" /></Folder>,
  },
  {
    label: "Downloads",
    art: <Folder><path d="M8 5.500h5v5h2.500l-5 5-5-5H8z" fill="#d5d5d5" stroke="#8b8b8b" /></Folder>,
  },
];

function FileDialog() {
  return (
    <section
      role="dialog"
      aria-label="File Upload"
      className={`${UI} absolute top-[81px] right-[225px] bottom-[29px] left-[289px] z-20 flex flex-col rounded-t-[7px] bg-[#f2f1f0] text-sm text-[#4c4c4c] shadow-[0_12px_48px_2px_rgba(0,0,0,0.75)]`}
    >
      <header className="flex h-7 shrink-0 items-center rounded-t-[7px] border-t border-[#7a776c] bg-linear-to-b from-[#5a574e] to-[#3e3d38] pl-2 font-bold text-[#dfdbd2]">
        <button aria-label="Close" className="flex h-4 w-4 items-center justify-center rounded-full border border-[#38352f] bg-[#ed5a2f]">
          <svg width="6" height="6" viewBox="0 0 6 6"><path d="M0 0l6 6M6 0L0 6" stroke="#4a1c0c" strokeWidth="1.200" /></svg>
        </button>
        <button aria-label="Maximize" className="ml-[3px] flex h-4 w-4 items-center justify-center rounded-full border border-[#35332e] bg-[#76736a]">
          <span className="h-2 w-2 border border-[#33322d]" />
        </button>
        <h2 className="ml-3">File Upload</h2>
      </header>
      <div className="flex min-h-0 flex-1 flex-col px-3 pt-[13px] pb-[13px]">
        <div className="flex h-[31px] shrink-0 gap-0.5">
          <button aria-label="Type a file name" className={`${gtkButton} mr-3 flex w-[27px] items-center justify-center`}>
            <svg width="16" height="16" viewBox="0 0 16 16">
              <path d="M2 14l2-5 8-8 3 2-8 9z" fill="#3f4142" />
              <path d="M1.500 14.500L4 9l3 3z" fill="#efe394" />
              <path d="M11 1.500l2-1.500 3 2-1.500 2z" fill="#cf8cc4" />
              <path d="M5 15h9" stroke="#ccc" strokeWidth="1.500" />
            </svg>
          </button>
          <button aria-label="Scroll left" className={`${gtkButton} flex w-[22px] items-center justify-center`}>
            <svg width="5" height="8" viewBox="0 0 5 8"><path d="M5 0v8L0 4z" fill="#777" /></svg>
          </button>
          <button className={`${gtkButton} flex w-[63px] items-center justify-center gap-0.5`}><Folder>{houseArt}</Folder>stam</button>
          <button className={`${gtkButton} w-[68px]`}>Pictures</button>
          <button className="w-[70px] rounded-sm border border-[#a09d98] bg-linear-to-b from-[#dddbd8] to-[#ebeae8] font-bold">Webcam</button>
        </div>
        <div className="mt-[13px] flex min-h-0 flex-1">
          <div className="flex w-[148px] shrink-0 flex-col">
            <div className="flex flex-1 flex-col border border-[#bdbab5] bg-white">
              <div className="flex h-[25px] items-center border-b border-[#bdbab5] bg-linear-to-b from-white to-[#f1f0ee] pl-[3px]">Places</div>
              {places.map((p) => (
                <React.Fragment key={p.label}>
                  {p.gap && <hr className="mt-px mb-0.5 border-[#dfddda]" />}
                  <button className="flex h-[23px] w-full items-center gap-1 pl-0.5 text-left">
                    {p.art}
                    {p.label}
                  </button>
                </React.Fragment>
              ))}
            </div>
            <div className="flex h-[30px] items-center gap-[18px] pl-2.5">
              <button aria-label="Add place"><svg width="10" height="10" viewBox="0 0 10 10"><path d="M0 5h10M5 0v10" stroke="#b9b7b3" strokeWidth="2" /></svg></button>
              <button aria-label="Remove place"><svg width="10" height="10" viewBox="0 0 10 10"><path d="M0 5h10" stroke="#b9b7b3" strokeWidth="2" /></svg></button>
            </div>
          </div>
          <div className="flex w-1.5 shrink-0 flex-col items-center justify-center gap-0.5">
            <span className="h-px w-1 bg-[#bdbab5]" />
            <span className="h-px w-1 bg-[#bdbab5]" />
            <span className="h-px w-1 bg-[#bdbab5]" />
          </div>
          <div className="flex min-w-0 flex-1 flex-col items-end">
            <div className="flex min-h-0 w-full flex-1 gap-[3px]">
              <div className="flex-1 border border-[#bdbab5] bg-[#fce6de]">
                <table className="w-full border-collapse">
                  <thead>
                    <tr className="h-[25px] border-b border-[#bdbab5] bg-linear-to-b from-white to-[#f1f0ee]">
                      <th className="p-0 pl-[5px] text-left font-normal">
                        <div className="flex items-center justify-between pr-2">
                          Name
                          <svg width="8" height="6" viewBox="0 0 8 6"><path d="M0 6h8L4 0z" fill="#777" /></svg>
                        </div>
                      </th>
                      <th className="w-[37px] border-l border-[#dad8d4] p-0 pl-[5px] text-left font-normal">Size</th>
                      <th className="w-[86px] border-l border-[#dad8d4] p-0 pl-[5px] text-left font-normal">Modified</th>
                    </tr>
                  </thead>
                </table>
              </div>
              <div className="flex w-[13px] shrink-0 flex-col items-center rounded-full border border-[#c4c1bc]">
                <svg className="my-1.5" width="6" height="4" viewBox="0 0 6 4"><path d="M0 4h6L3 0z" fill="#aaa" /></svg>
                <div className="w-[13px] flex-1 rounded-full border border-[#a9a6a2] bg-linear-to-r from-white to-[#efeeec]" />
                <svg className="my-1.5" width="6" height="4" viewBox="0 0 6 4"><path d="M0 0h6L3 4z" fill="#aaa" /></svg>
              </div>
            </div>
            <div className="relative mt-[7px] h-[29px] w-[88px]">
              <select aria-label="File type" className={`${gtkButton} h-full w-full appearance-none pl-[5px]`}>
                <option>All Files</option>
              </select>
              <svg className="pointer-events-none absolute top-[9px] right-2" width="6" height="12" viewBox="0 0 6 12"><path d="M0 3.500h6L3 0zM0 8.500h6L3 12z" fill="#777" /></svg>
            </div>
          </div>
        </div>
        <div className="mt-[13px] flex h-7 shrink-0 justify-end gap-2">
          <button className={`${gtkButton} w-[83px]`}>Cancel</button>
          <button className="w-[83px] rounded-sm border border-[#b98574] border-b-[#8f5a48] bg-linear-to-b from-[#fdb195] to-[#f58e67]">Open</button>
        </div>
      </div>
    </section>
  );
}

/* ---------- desktops ---------- */

export default function App() {
  return (
    <div className="grid h-screen grid-cols-[1680fr_1366fr] overflow-hidden bg-black">
      <section aria-label="Primary display" className="flex min-h-0 min-w-0 flex-col overflow-hidden">
        <TopPanel />
        <div className="flex min-h-0 flex-1">
          <Launcher count={15} marks={{ Files: "arrow", Firefox: "pips", Terminal: "pips", "Document Viewer": "hollow", "Text Editor": "arrow" }} />
          <div className="flex min-h-0 min-w-0 flex-1 flex-col">
            <TabBar
              className="h-8"
              tabs={[
                { label: "Inbox (3) - katsaouni...", icon: <GmailMark /> },
                { label: "9. User Authenticati...", icon: <TangoMark />, active: true },
                { label: "stammy31/DjangoP...", icon: <GithubMark /> },
              ]}
            />
            <Toolbar pre="www." host="tangowithdjango.com" path="/book17/chapters/login.html" reader searchWidth="w-72" />
            <TutorialPage />
          </div>
        </div>
      </section>
      <section aria-label="Secondary display" className="flex min-h-0 min-w-0 flex-col pt-[152px] pb-[130px]">
        <div className="relative flex min-h-0 flex-1 flex-col overflow-hidden">
          <TopPanel title="Firefox Web Browser" />
          <div className="flex min-h-0 flex-1">
            <Launcher count={11} folded marks={{ Files: "hollow", Firefox: "arrow", Terminal: "hollow" }} />
            <div className="flex min-h-0 min-w-0 flex-1 flex-col">
              <TabBar className="h-[30px]" tabs={[{ label: "Rango", active: true }, { label: "Select user to change | ..." }]} />
              <Toolbar host="127.0.0.1" path=":8000/rango/register/" searchWidth="w-[228px]" />
              <RegisterPage />
            </div>
          </div>
          <FileDialog />
        </div>
      </section>
    </div>
  );
}
